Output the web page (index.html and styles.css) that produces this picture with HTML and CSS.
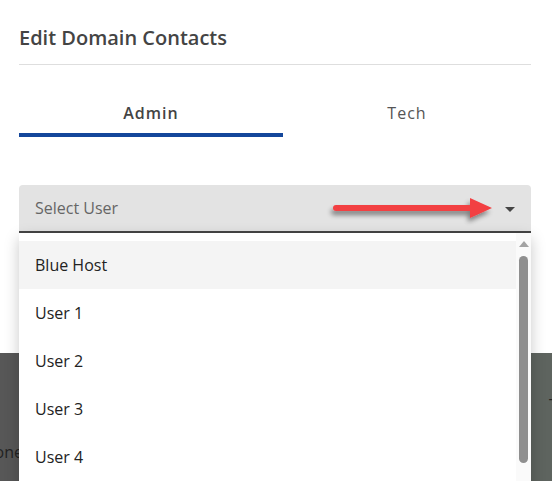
FILE: index.html
```html
<!DOCTYPE html>
<html>
<head>
<meta charset="utf-8">
<link rel="stylesheet" href="styles.css">
</head>
<body>
<div class="page">
  <div class="dialog">
    <div class="header"><h1 class="title">Edit Domain Contacts</h1></div>
    <div class="tabs">
      <div class="tab tab-active">Admin</div>
      <div class="tab">Tech</div>
    </div>
    <div class="select">
      <span class="select-label">Select User</span>
      <span class="caret"></span>
      <svg class="annot" width="180" height="40" viewBox="0 0 180 40">
        <defs>
          <filter id="sh" x="-20%" y="-50%" width="140%" height="200%">
            <feGaussianBlur in="SourceAlpha" stdDeviation="2.5"/>
            <feOffset dx="-2" dy="4" result="b"/>
            <feComponentTransfer><feFuncA type="linear" slope="0.45"/></feComponentTransfer>
            <feMerge><feMergeNode/><feMergeNode in="SourceGraphic"/></feMerge>
          </filter>
        </defs>
        <g filter="url(#sh)">
          <path d="M5 10 L139 10 L139 3 L161 13 L139 23 L139 16 L5 16 Z" fill="#f23f43"/>
          <circle cx="5" cy="13" r="3" fill="#f23f43"/>
        </g>
      </svg>
      <div class="menu">
        <ul class="menu-list">
          <li class="item item-hover">Blue Host</li>
          <li class="item">User 1</li>
          <li class="item">User 2</li>
          <li class="item">User 3</li>
          <li class="item">User 4</li>
        </ul>
        <div class="scrollbar">
          <span class="sb-up"></span>
          <span class="sb-thumb"></span>
        </div>
      </div>
    </div>
  </div>
  <div class="backdrop">
    <div class="bd-left"><span class="bd-text">Phone</span></div>
    <div class="bd-mid"></div>
    <div class="bd-right"><span class="bd-mark">T</span></div>
  </div>
</div>
</body>
</html>
```

FILE: styles.css
```css
* { box-sizing: border-box; }
html, body { margin: 0; padding: 0; }
body {
  font-family: "Open Sans", "DejaVu Sans", sans-serif;
  background: #ffffff;
}
.page {
  position: relative;
  width: 552px;
  height: 481px;
  overflow: hidden;
}
.dialog {
  position: relative;
  z-index: 2;
  height: 353px;
  background: #ffffff;
  padding: 0 21px 0 19px;
}
.header {
  padding-top: 25px;
  padding-bottom: 13px;
  border-bottom: 1px solid #dedede;
}
.title {
  margin: 0;
  font-size: 20px;
  line-height: 26px;
  font-weight: 600;
  color: #444444;
}
.tabs {
  display: flex;
}
.tab {
  padding: 36px 0 8px;
  line-height: 24px;
  font-size: 16px;
  letter-spacing: 1px;
  text-align: center;
  color: #555555;
  border-bottom: 4px solid transparent;
}
.tab-active {
  width: 264px;
  font-weight: 600;
  color: #444444;
  border-bottom-color: #14479b;
}
.tab:not(.tab-active) {
  flex: 1;
}
.select {
  position: relative;
  margin-top: 48px;
  height: 48px;
  background: #e3e3e3;
  border-radius: 4px 4px 0 0;
  border-bottom: 2px solid #454545;
  display: flex;
  align-items: center;
  padding: 0 16px;
}
.select-label {
  flex: 1;
  font-size: 16px;
  line-height: 46px;
  color: #666666;
}
.caret {
  width: 0;
  height: 0;
  margin-top: 3px;
  border-left: 5px solid transparent;
  border-right: 5px solid transparent;
  border-top: 5px solid #454545;
}
.annot {
  position: absolute;
  left: 312px;
  top: 10px;
  overflow: visible;
}
.menu {
  position: absolute;
  left: 0;
  top: 48px;
  width: 512px;
  height: 260px;
  background: #ffffff;
  box-shadow: 0 5px 14px rgba(0, 0, 0, 0.22);
  display: flex;
  overflow: hidden;
}
.menu-list {
  flex: 1;
  list-style: none;
  margin: 0;
  padding: 8px 0 0;
}
.item {
  height: 48px;
  line-height: 48px;
  padding-left: 16px;
  font-size: 16px;
  color: #222222;
}
.item-hover {
  background: #f4f4f4;
}
.scrollbar {
  width: 15px;
  background: #fafafa;
  display: flex;
  flex-direction: column;
  align-items: center;
  padding-top: 8px;
}
.sb-up {
  width: 0;
  height: 0;
  border-left: 5px solid transparent;
  border-right: 5px solid transparent;
  border-bottom: 6px solid #a3a3a3;
}
.sb-thumb {
  margin-top: 9px;
  width: 9px;
  height: 207px;
  border-radius: 5px;
  background: #8f8f8f;
}
.backdrop {
  display: flex;
  height: 128px;
}
.bd-left {
  width: 19px;
  background: #575757;
  display: flex;
  justify-content: flex-end;
  overflow: hidden;
  padding-top: 88px;
}
.bd-text {
  font-size: 16px;
  line-height: 22px;
  color: #222222;
  white-space: nowrap;
  margin-right: -4px;
}
.bd-mid {
  width: 512px;
  background: #5a5a5a;
}
.bd-right {
  flex: 1;
  background: #5e645f;
  overflow: hidden;
  padding: 41px 0 0 18px;
}
.bd-mark {
  font-size: 16px;
  line-height: 22px;
  color: #222222;
}
```
